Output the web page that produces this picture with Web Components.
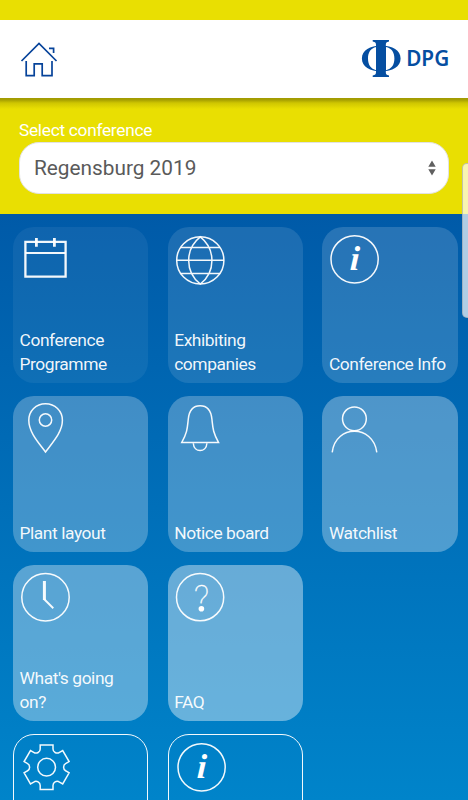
<!DOCTYPE html>
<html lang="en">
<head>
<meta charset="utf-8">
<meta name="viewport" content="width=device-width, initial-scale=1">
<title>DPG</title>
<style>
  html, body { height: 100%; }
  body { margin: 0; overflow: hidden; font-family: Roboto, "Liberation Sans", sans-serif; }
</style>
</head>
<body>
<dpg-app>
  <dpg-header slot="header"></dpg-header>
  <conference-select slot="select" label="Select conference">Regensburg 2019</conference-select>
  <menu-tile icon="calendar" shade="0.06">Conference Programme</menu-tile>
  <menu-tile icon="globe" shade="0.11">Exhibiting companies</menu-tile>
  <menu-tile icon="info" shade="0.153">Conference Info</menu-tile>
  <menu-tile icon="pin" shade="0.255">Plant layout</menu-tile>
  <menu-tile icon="bell" shade="0.255">Notice board</menu-tile>
  <menu-tile icon="person" shade="0.305">Watchlist</menu-tile>
  <menu-tile icon="clock" shade="0.35">What's going on?</menu-tile>
  <menu-tile icon="question" shade="0.405">FAQ</menu-tile>
  <span></span>
  <menu-tile icon="gear" outline></menu-tile>
  <menu-tile icon="info" outline></menu-tile>
</dpg-app>

<script>
// Six teeth, one every 60 degrees, joined by round notches
function gearPath(cx, cy) {
  let d = '';
  for (let i = 0; i < 6; i++) {
    const a = i * Math.PI / 3;
    const p = (x, y) => (cx + x * Math.cos(a) - y * Math.sin(a)).toFixed(2) + ' ' +
                        (cy + x * Math.sin(a) + y * Math.cos(a)).toFixed(2);
    d += (i ? 'A4.2 4.2 0 0 0 ' : 'M') + p(-6.4, -18.6);
    d += 'L' + p(-6.4, -22.3) + 'L' + p(6.4, -22.3) + 'L' + p(6.4, -18.6);
  }
  // close with the last notch
  return d + `A4.2 4.2 0 0 0 ${cx - 6.4} ${cy - 18.6}Z`;
}

const ICONS = {
  calendar: `
    <path d="M12.4 14.8H52.6V49.6H12.4Z" stroke-width="2.3"/>
    <path d="M12.4 26H52.6" stroke-width="2"/>
    <path d="M23.4 11V19.8M41.4 11V19.8" stroke-width="2.8"/>`,
  globe: `
    <circle cx="32.3" cy="33.4" r="23.6"/>
    <path d="M32.3 9.8C16.8 22 16.8 45 32.3 57C47.8 45 47.8 22 32.3 9.8ZM12.5 20.6H52.1M8.7 33.3H55.9M12.5 46.5H52.1"/>`,
  info: `
    <circle cx="32.6" cy="32.3" r="23.6"/>
    <text transform="translate(32.4 43) skewX(-3)" font-family="Liberation Serif, serif" font-size="34.5" font-weight="bold" font-style="italic" text-anchor="middle" fill="#fff" stroke="none">i</text>`,
  pin: `
    <path d="M32.5 56C25 46 15.8 36 15.8 24.3C15.8 15 23 7.8 32.5 7.8S49.4 15 49.4 24.3C49.4 36 40 46 32.5 56Z"/>
    <circle cx="32.5" cy="24" r="6.2"/>`,
  bell: `
    <path d="M13.8 46.4C19.5 36 19.3 32 20.3 23C21.2 14 25.5 9.7 32.1 9.7S43 14 43.9 23C44.9 32 44.8 36 50.5 46.4Z"/>
    <path d="M25.3 47.3C25.8 57 38.4 57 38.9 47.3"/>`,
  person: `
    <circle cx="32.4" cy="22.8" r="11.9"/>
    <path d="M10.2 56.3C13.7 28.3 51 28.3 54.8 56.3"/>`,
  clock: `
    <circle cx="32.5" cy="32.2" r="23.7"/>
    <path d="M31.4 16V35" stroke-width="3"/>
    <path d="M31 34L40.3 43.2" stroke-width="1.9"/>`,
  question: `
    <circle cx="32.1" cy="32.2" r="23.6"/>
    <text x="33.4" y="44.5" font-family="Roboto, sans-serif" font-size="35" font-weight="100" text-anchor="middle" fill="#fff" stroke="#fff" stroke-width=".3">?</text>
    <circle cx="33.4" cy="43.7" r="2.8" fill="#fff" stroke="none"/>`,
  gear: `
    <path d="${gearPath(32.6, 32.2)}"/>
    <circle cx="32.6" cy="32.2" r="8.9"/>`
};

class DpgApp extends HTMLElement {
  connectedCallback() {
    this.attachShadow({ mode: 'open' });
    this.shadowRoot.innerHTML = `
      <style>
        :host {
          display: flex; flex-direction: column;
          height: 100vh; overflow: hidden; position: relative;
          background: #e9df02;
        }
        .status { flex: 0 0 20px; }
        main {
          flex: 1; min-height: 0; overflow: hidden;
          background: linear-gradient(#005aa8, #0084ca);
          padding: 13px 0 0 13px;
          display: grid;
          grid-template-columns: repeat(3, 135.3px);
          grid-auto-rows: 156px;
          column-gap: 19.4px; row-gap: 13px;
          align-content: start;
        }
        /* edge panel handle lying over the page */
        .edge {
          position: absolute; right: -2px; top: 163px;
          box-sizing: border-box; width: 8px; height: 155px;
          background: rgba(255,255,255,.69);
          border: 1px solid rgba(150,160,170,.6);
          border-radius: 5px 0 0 5px;
        }
      </style>
      <div class="status"></div>
      <slot name="header"></slot>
      <slot name="select"></slot>
      <main><slot></slot></main>
      <div class="edge"></div>
    `;
  }
}
customElements.define('dpg-app', DpgApp);

class DpgHeader extends HTMLElement {
  connectedCallback() {
    this.attachShadow({ mode: 'open' });
    this.shadowRoot.innerHTML = `
      <style>
        :host {
          display: flex; flex: 0 0 78px; box-sizing: border-box;
          justify-content: space-between; align-items: center;
          padding: 0 8px 0 20px;
          background: #fff;
        }
        svg { display: block; }
      </style>
      <svg width="38" height="38" viewBox="20 40 38 38" fill="none" stroke="#06439a" stroke-width="1.7">
        <path d="M21.5 61L39 43.5L56.5 61"/>
        <path d="M26.2 61V75.7H34.2V63.8H42.2V75.7H52V61"/>
        <path d="M49 48.3H53.6V53"/>
      </svg>
      <svg width="100" height="42" viewBox="360 38 100 42" fill="#054ea1">
        <path fill-rule="evenodd" d="M381.2 45.6C370 45.6 361.9 50.5 361.9 58.6S370 71.6 381.2 71.6S400.6 66.7 400.6 58.6S392.5 45.6 381.2 45.6ZM376.2 47V70.2C370.8 69 368 65 368 58.6S370.8 48.2 376.2 47ZM386 47C391.6 48.2 394.4 52.2 394.4 58.6S391.6 69 386 70.2Z"/>
        <path d="M372.7 40H389V41.5C386.5 41.9 385.8 42.8 385.8 45V72C385.8 74.3 386.5 75.1 389 75.5V77H372.7V75.5C375.2 75.1 376 74.3 376 72V45C376 42.8 375.2 41.9 372.7 41.5Z"/>
        <text x="406.2" y="66.4" font-family="Noto Sans, sans-serif" font-weight="600" font-size="22" textLength="43" lengthAdjust="spacingAndGlyphs">DPG</text>
      </svg>
    `;
  }
}
customElements.define('dpg-header', DpgHeader);

class ConferenceSelect extends HTMLElement {
  connectedCallback() {
    this.attachShadow({ mode: 'open' });
    this.shadowRoot.innerHTML = `
      <style>
        :host {
          display: block; flex: 0 0 116px; box-sizing: border-box;
          padding: 20px 19px 0;
          background: linear-gradient(#a19a02, #a8a101 2px, #cfc601 5px, #e9df02 11px);
        }
        label { display: block; font-size: 17.3px; line-height: 24px; letter-spacing: -.28px; color: #fff; }
        .box {
          display: flex; align-items: center; justify-content: space-between;
          box-sizing: border-box; height: 52px;
          padding: 0 12px 0 14px;
          background: #fff; border: 1px solid #e2e2e2; border-radius: 20px;
          font-size: 20.8px; color: #5a5a5a;
        }
      </style>
      <label>${this.getAttribute('label')}</label>
      <div class="box">
        <slot></slot>
        <svg width="8" height="16" viewBox="0 0 8 16" fill="#606060">
          <path d="M.3 6.7L4 .4L7.7 6.7ZM.3 9.3H7.7L4 15.6Z"/>
        </svg>
      </div>
    `;
  }
}
customElements.define('conference-select', ConferenceSelect);

class MenuTile extends HTMLElement {
  connectedCallback() {
    const shade = this.getAttribute('shade') || 0;
    this.attachShadow({ mode: 'open' });
    this.shadowRoot.innerHTML = `
      <style>
        :host {
          display: flex; flex-direction: column; justify-content: space-between;
          box-sizing: border-box;
          border-radius: 21px;
          background: rgba(255,255,255,${shade});
          color: rgba(255,255,255,.95);
        }
        :host([outline]) { border: 1.4px solid rgba(255,255,255,.95); }
        svg { display: block; }
        .label { padding: 0 6px 6px 6.5px; font-size: 17.4px; line-height: 24.6px; letter-spacing: -.43px; }
      </style>
      <svg width="64" height="64" viewBox="0 0 64 64" fill="none" stroke="rgba(255,255,255,.95)" stroke-width="1.5">
        ${ICONS[this.getAttribute('icon')]}
      </svg>
      <div class="label"><slot></slot></div>
    `;
  }
}
customElements.define('menu-tile', MenuTile);
</script>
</body>
</html>
